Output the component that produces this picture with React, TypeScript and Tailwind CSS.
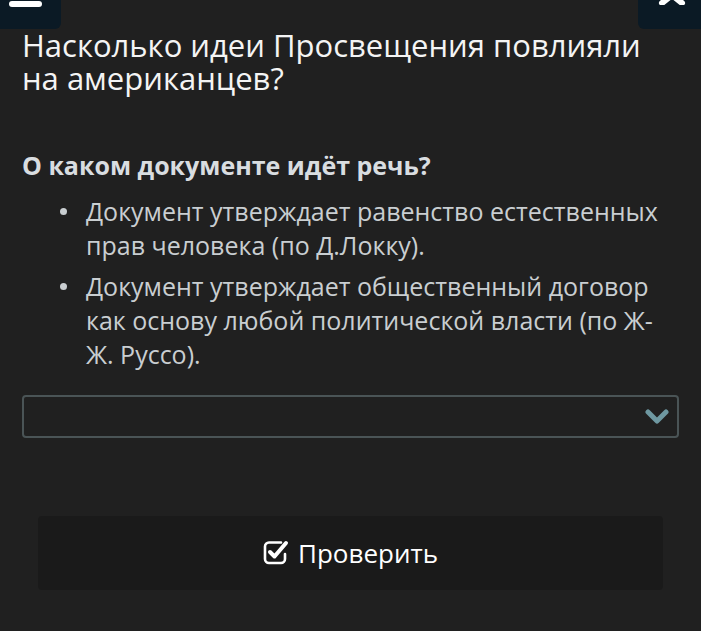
export default function App() {
  return (
    <div className="relative h-[631px] w-[701px] overflow-hidden bg-[#202020] font-['Open_Sans',sans-serif]">
      <div className="absolute left-0 top-0 h-[29px] w-[61px] rounded-br-md bg-[#0b1a25]">
        <div className="ml-[9px] mt-[1px] h-[6px] w-[33px] rounded-sm bg-white" />
      </div>
      <div className="absolute right-0 top-0 h-[29px] w-[63px] rounded-bl-md bg-[#0b1a25]">
        <svg className="absolute left-[20px] top-[-15px]" width="28" height="20" viewBox="0 0 28 20">
          <path d="M4 2 L24 18 M24 2 L4 18" stroke="white" strokeWidth="6" strokeLinecap="round" />
        </svg>
      </div>

      <div className="px-[22px] pt-[29px]">
        <h1 className="pr-[20px] text-[31px] leading-[33px] text-[#f4f4f4]">
          Насколько идеи Просвещения повлияли на американцев?
        </h1>

        <h2 className="mt-[54px] text-[25px] font-bold leading-[32px] text-[#d9dde0]">
          О каком документе идёт речь?
        </h2>

        <ul className="mt-[13px] flex flex-col gap-[7px] pl-[64px] pr-[15px] text-[25px] leading-[34px] text-[#c9ced1]">
          <li className="relative">
            <span className="absolute left-[-26px] top-[14px] h-[7px] w-[7px] rounded-full bg-[#c9ced1]" />
            Документ утверждает равенство естественных прав человека (по Д.Локку).
          </li>
          <li className="relative">
            <span className="absolute left-[-26px] top-[14px] h-[7px] w-[7px] rounded-full bg-[#c9ced1]" />
            Документ утверждает общественный договор как основу любой политической власти (по Ж-Ж. Руссо).
          </li>
        </ul>

        <div className="mt-[24px] flex h-[43px] items-center justify-end rounded-[4px] border-2 border-[#4a5456] pr-[8px]">
          <svg width="24" height="16" viewBox="0 0 24 16">
            <path d="M3 3 L12 12 L21 3" fill="none" stroke="#6e98a1" strokeWidth="5" strokeLinecap="round" strokeLinejoin="round" />
          </svg>
        </div>
      </div>

      <div className="mx-[38px] mt-[78px] flex h-[74px] items-center justify-center gap-[9px] rounded-[4px] bg-[#1a1a1a]">
        <svg width="26" height="26" viewBox="0 0 26 26" className="mt-[-2px]">
          <path d="M18 3.5 H6 A4 4 0 0 0 2 7.5 V20 A4 4 0 0 0 6 24 H18 A4 4 0 0 0 22 20 V15" fill="none" stroke="white" strokeWidth="2.6" strokeLinecap="round" />
          <path d="M7 13 L11.5 17.5 L23 4" fill="none" stroke="white" strokeWidth="4" strokeLinecap="round" strokeLinejoin="round" />
        </svg>
        <span className="text-[26px] text-white">Проверить</span>
      </div>
    </div>
  );
}
